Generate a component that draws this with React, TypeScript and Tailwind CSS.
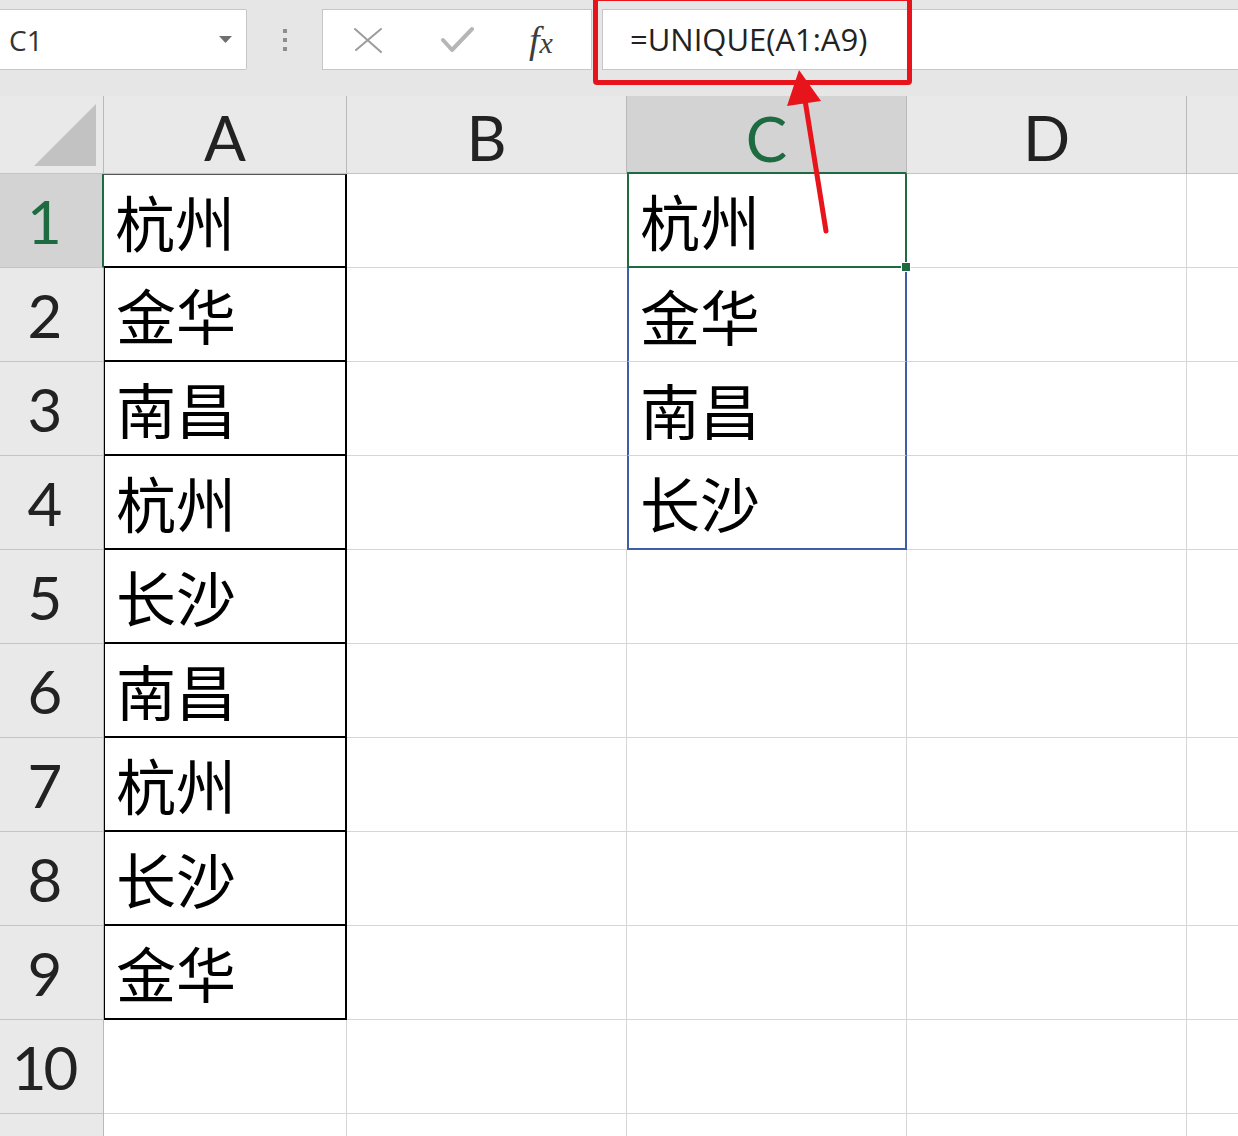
import React from "react";

const rows: (string | null)[] = ["杭州", "金华", "南昌", "杭州", "长沙", "南昌", "杭州", "长沙", "金华"];
const uniq = ["杭州", "金华", "南昌", "长沙"];

const cjk = "font-['Noto_Sans_CJK_SC','Noto_Sans_CJK_JP',sans-serif]";
const num = "font-['Lato','Liberation_Sans',sans-serif]";

function ColHeader({ label, selected }: { label: string; selected?: boolean }) {
  return (
    <div
      className={
        selected
          ? `h-[78px] bg-[#d3d3d3] border-r border-[#b9b9b9] border-b-2 border-b-[#1e6b41] flex items-end justify-center pb-[3px] text-[62px] leading-none text-[#1e6b41] ${num}`
          : `h-[78px] bg-[#e9e9e9] border-r border-[#b9b9b9] border-b border-b-[#c4c4c4] flex items-end justify-center pb-[5px] text-[62px] leading-none text-[#222] ${num}`
      }
    >
      {label}
    </div>
  );
}

function RowHeader({ n, selected }: { n: number | null; selected?: boolean }) {
  return (
    <div
      className={
        selected
          ? `h-[94px] bg-[#d3d3d3] border-b border-[#c4c4c4] border-r-2 border-r-[#1e6b41] flex items-center justify-center pr-[16px] text-[60px] leading-none tracking-[-3px] text-[#1e6b41] ${num}`
          : `h-[94px] bg-[#e9e9e9] border-b border-[#c4c4c4] border-r border-r-[#b9b9b9] flex items-center justify-center pr-[16px] text-[60px] leading-none tracking-[-3px] text-[#222] ${num}`
      }
    >
      {n}
    </div>
  );
}

export default function App() {
  const bodyRows = Array.from({ length: 11 }, (_, i) => i);
  return (
    <div className="relative w-[1238px] h-[1136px] overflow-hidden bg-[#e6e6e6]">
      {/* Toolbar */}
      <div className="flex items-start h-[96px] pt-[9px]">
        <div className="w-[247px] h-[61px] bg-white border border-l-0 border-[#c6c6c6] rounded-r-[2px] flex items-center justify-between pl-[9px] pr-[14px]">
          <span className="text-[28px] text-[#333] font-['Open_Sans','Noto_Sans',sans-serif]">C1</span>
          <svg width="13" height="8" viewBox="0 0 13 8">
            <polygon points="0,0 13,0 6.5,7" fill="#6f6f6f" />
          </svg>
        </div>
        <div className="w-[75px] h-[61px] flex flex-col items-center justify-center gap-[5px]">
          <div className="w-[4px] h-[4px] bg-[#8d8d8d]" />
          <div className="w-[4px] h-[4px] bg-[#8d8d8d]" />
          <div className="w-[4px] h-[4px] bg-[#8d8d8d]" />
        </div>
        <div className="w-[270px] h-[61px] bg-white border border-[#c6c6c6] flex items-center">
          <svg className="ml-[30px]" width="30" height="28" viewBox="0 0 30 28">
            <line x1="2" y1="3" x2="28" y2="26" stroke="#9c9c9c" strokeWidth="2" strokeLinecap="round" />
            <line x1="28" y1="3" x2="3" y2="24" stroke="#9c9c9c" strokeWidth="2" strokeLinecap="round" />
          </svg>
          <svg className="ml-[58px]" width="34" height="28" viewBox="0 0 34 28">
            <polyline points="2,14 11,24 31,3" fill="none" stroke="#b6b6b6" strokeWidth="4" strokeLinecap="round" strokeLinejoin="round" />
          </svg>
          <span className="ml-[54px] italic text-[38px] leading-none text-[#3d3d3d] font-['Liberation_Serif',serif]">
            f<span className="text-[30px]">x</span>
          </span>
        </div>
        <div className="ml-[10px] flex-1 h-[61px] bg-white border border-r-0 border-[#c6c6c6] flex items-center pl-[27px]">
          <span className="text-[31px] text-[#222] font-['Open_Sans','Noto_Sans',sans-serif]">=UNIQUE(A1:A9)</span>
        </div>
      </div>

      {/* Sheet grid */}
      <div className="grid grid-cols-[104px_243px_280px_280px_280px_280px] w-max">
        <div className="h-[78px] bg-[#e9e9e9] border-r border-[#b9b9b9] border-b border-b-[#c4c4c4] flex items-end justify-end pr-[7px] pb-[7px]">
          <svg width="62" height="62" viewBox="0 0 62 62">
            <polygon points="0,62 62,0 62,62" fill="#c2c2c2" />
          </svg>
        </div>
        <ColHeader label="A" />
        <ColHeader label="B" />
        <ColHeader label="C" selected />
        <ColHeader label="D" />
        <ColHeader label="" />

        {bodyRows.map((i) => {
          const a = i < 9 ? rows[i] : null;
          const c = i < 4 ? uniq[i] : null;
          const aCls =
            i < 9
              ? `h-[94px] bg-white border-r-2 border-b-2 border-black ${i === 0 ? "border-t border-t-[#555]" : "border-l border-l-black"} flex items-center pl-[11px]`
              : "h-[94px] bg-white border-r border-b border-[#d6d6d6] flex items-center pl-[11px]";
          let cCls = "h-[94px] bg-white border-r border-b border-[#d6d6d6] flex items-center pl-[11px]";
          if (i === 0) cCls = "relative h-[94px] bg-white border-x-2 border-b-2 border-[#1e6b41] flex items-center pl-[11px]";
          else if (i < 3) cCls = "h-[94px] bg-white border-x-2 border-[#3f5ea8] border-b border-b-[#d6d6d6] flex items-center pl-[11px]";
          else if (i === 3) cCls = "h-[94px] bg-white border-x-2 border-b-2 border-[#3f5ea8] flex items-center pl-[11px]";
          const bCls =
            i < 4
              ? "h-[94px] bg-white border-b border-[#d6d6d6]"
              : "h-[94px] bg-white border-r border-b border-[#d6d6d6]";
          return (
            <React.Fragment key={i}>
              <RowHeader n={i < 10 ? i + 1 : null} selected={i === 0} />
              <div className={aCls}>
                {a && <span className={`${cjk} text-[60px] leading-none text-black`}>{a}</span>}
              </div>
              <div className={bCls} />
              <div className={cCls}>
                {c && <span className={`${cjk} text-[60px] leading-none text-black`}>{c}</span>}
                {i === 0 && (
                  <div className="absolute -right-[6px] -bottom-[6px] w-[10px] h-[10px] bg-[#1e6b41] border border-white" />
                )}
              </div>
              <div className="h-[94px] bg-white border-r border-b border-[#d6d6d6]" />
              <div className="h-[94px] bg-white border-r border-b border-[#d6d6d6]" />
            </React.Fragment>
          );
        })}
      </div>

      {/* Red annotation box */}
      <div className="absolute left-[593px] -top-[4px] w-[319px] h-[89px] border-[5px] border-[#e8141c] rounded-[4px]" />
      {/* Red arrow */}
      <svg className="absolute left-0 top-0 pointer-events-none" width="1238" height="1136" viewBox="0 0 1238 1136">
        <line x1="826" y1="231" x2="805" y2="100" stroke="#e8141c" strokeWidth="5" strokeLinecap="round" />
        <polygon points="799,70 787,106 821,101" fill="#e8141c" />
      </svg>
    </div>
  );
}
